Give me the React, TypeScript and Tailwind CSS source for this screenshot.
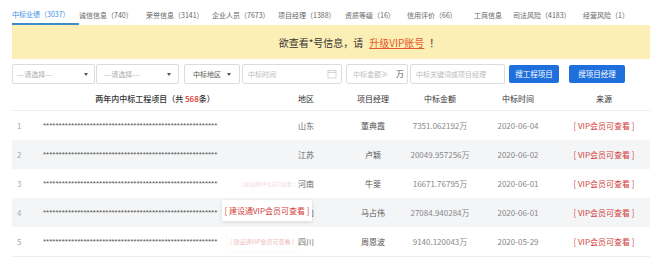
import { ReactNode } from 'react'

const TABS: [string, string, number][] = [
  ['中标业绩', '3037', 67],
  ['诚信信息', '740', 67],
  ['荣誉信息', '3141', 66],
  ['企业人员', '7673', 66],
  ['项目经理', '1388', 67],
  ['资质等级', '16', 62],
  ['信用评价', '66', 67],
  ['工商信息', '', 39],
  ['司法风险', '4183', 70],
  ['经营风险', '1', 60],
]

interface Row { n: number; area: string; pm: string; amount: string; date: string }

const ROWS: Row[] = [
  { n: 1, area: '山东', pm: '董典霞', amount: '7351.062192万', date: '2020-06-04' },
  { n: 2, area: '江苏', pm: '卢颖', amount: '20049.957256万', date: '2020-06-02' },
  { n: 3, area: '河南', pm: '牛斐', amount: '16671.76795万', date: '2020-06-01' },
  { n: 4, area: '河南', pm: '马占伟', amount: '27084.940284万', date: '2020-06-01' },
  { n: 5, area: '四川', pm: '周恩波', amount: '9140.120043万', date: '2020-05-29' },
]

const STARS = '*'.repeat(56)

function Caret() {
  return <span className="w-0 h-0 border-l-[2.5px] border-r-[2.5px] border-t-[3px] border-l-transparent border-r-transparent border-t-[#555]" />
}

function Box({ w, children, className = '' }: { w: string; children: ReactNode; className?: string }) {
  return (
    <div className={`${w} h-[20px] border border-[#dcdcdc] rounded-[2px] bg-white flex items-center text-[7px] ${className}`}>
      {children}
    </div>
  )
}

export default function App() {
  return (
    <div className="w-[650px] h-[263px] overflow-hidden bg-white font-['Noto_Sans_CJK_SC',sans-serif]">
      <div className="w-[706px] pl-3">
        {/* tabs */}
        <div className="flex h-[25px] text-[7px] text-[#666]">
          {TABS.map(([name, count, w], i) => (
            <div key={name} style={{ width: w }}
              className={`shrink-0 flex items-center pt-[6px] whitespace-nowrap ${i === 0 ? 'text-[#3a8ee6] border-b-2 border-[#3c8bcb]' : ''}`}>
              <span className={i === 0 ? 'w-[62px]' : ''}>{name}{count && `（${count}）`}</span>
            </div>
          ))}
        </div>

        {/* banner */}
        <div className="h-[34px] bg-[#fcefb6] flex items-center justify-center text-[10px] text-[#333]">
          欲查看*号信息，请<a className="ml-[6px] mr-[5px] text-[#e2582a] underline">升级VIP账号</a>！
        </div>

        {/* filters */}
        <div className="flex items-center mt-[5px] h-[20px]">
          <Box w="w-[83px]" className="justify-between pl-[4px] pr-[6px] text-[#aaa]"><span>---请选择---</span><Caret /></Box>
          <Box w="w-[83px]" className="ml-[1px] justify-between pl-[7px] pr-[7px] text-[#aaa]"><span>---请选择---</span><Caret /></Box>
          <Box w="w-[56px]" className="ml-[5px] justify-between pl-[8px] pr-[8px] text-[#555]"><span>中标地区</span><Caret /></Box>
          <Box w="w-[100px]" className="ml-[2px] justify-between pl-[5px] pr-[4px] text-[#bbb]">
            <span>中标时间</span>
            <svg width="10" height="10" viewBox="0 0 10 10" fill="none" stroke="#ccc" strokeWidth="0.8">
              <rect x="1" y="1.5" width="8" height="7.5" />
              <line x1="1" y1="3.5" x2="9" y2="3.5" />
              <line x1="3" y1="0.5" x2="3" y2="2.5" />
              <line x1="7" y1="0.5" x2="7" y2="2.5" />
            </svg>
          </Box>
          <Box w="w-[62px]" className="ml-[4px] pl-[6px] pr-[3px] justify-between text-[#bbb]">
            <span>中标金额≥</span><span className="text-[8px] text-[#555]">万</span>
          </Box>
          <Box w="w-[95px]" className="ml-[2px] pl-[5px] text-[#bbb]"><span>中标关键词或项目经理</span></Box>
          <button className="ml-[4px] w-[50px] h-[18px] rounded-[2px] bg-[#1e6fdc] text-white text-[7.5px]">搜工程项目</button>
          <button className="ml-[10px] w-[56px] h-[18px] rounded-[2px] bg-[#1e6fdc] text-white text-[7.5px]">搜项目经理</button>
        </div>

        {/* table */}
        <div className="w-[638px] mt-[3px]">
          <div className="flex h-[24px] items-center border-b border-[#eee] text-[8px] text-[#333]">
            <div className="w-[28px]" />
            <div className="w-[230px] flex justify-center whitespace-nowrap font-medium">
              两年内中标工程项目（共&nbsp;<span className="text-[#e0302a]">568</span>条）
            </div>
            <div className="w-[72px] flex justify-center">地区</div>
            <div className="w-[62px] flex justify-center">项目经理</div>
            <div className="w-[72px] flex justify-center">中标金额</div>
            <div className="w-[84px] flex justify-center">中标时间</div>
            <div className="w-[88px] flex justify-center">来源</div>
          </div>
          {ROWS.map((r, i) => (
            <div key={r.n} className={`relative flex h-[29px] items-center text-[8px] ${i % 2 === 1 ? 'bg-[#f4f5f7]' : ''}`}>
              <div className="w-[28px] pl-[5px] text-[#aaa]">{r.n}</div>
              <div className="w-[230px] pl-[3px] text-[#555] font-['Liberation_Sans',sans-serif] whitespace-nowrap overflow-hidden">{STARS}</div>
              <div className="w-[72px] flex justify-center text-[#666]">{r.area}</div>
              <div className="w-[62px] flex justify-center text-[#555] whitespace-nowrap">{r.pm}</div>
              <div className="w-[72px] flex justify-center text-[#888] whitespace-nowrap">{r.amount}</div>
              <div className="w-[84px] flex justify-center text-[#888]">{r.date}</div>
              <div className="w-[88px] flex justify-center text-[#d0413a] whitespace-nowrap">[ VIP会员可查看 ]</div>
              {r.n === 3 && (
                <div className="absolute left-[234px] top-[6px] h-[17px] w-[44px] flex items-center justify-center whitespace-nowrap text-[5px] text-[#e07a75] opacity-30">
                  [ 建设通VIP会员可查看 ]
                </div>
              )}
              {r.n === 4 && (
                <div className="absolute left-[210px] top-[2px] h-[21px] w-[90px] bg-white flex items-center justify-center whitespace-nowrap text-[8px] text-[#d0413a] shadow-[0_1px_4px_rgba(0,0,0,0.12)]">
                  [ 建设通VIP会员可查看 ]
                </div>
              )}
              {r.n === 5 && (
                <div className="absolute left-[216px] top-[4px] h-[20px] w-[68px] bg-white/60 flex items-center justify-center whitespace-nowrap text-[6px] text-[#e07a75] opacity-50 shadow-[0_1px_3px_rgba(0,0,0,0.05)]">
                  [ 建设通VIP会员可查看 ]
                </div>
              )}
            </div>
          ))}
          <div className="border-b border-[#eee]" />
        </div>
      </div>
    </div>
  )
}
